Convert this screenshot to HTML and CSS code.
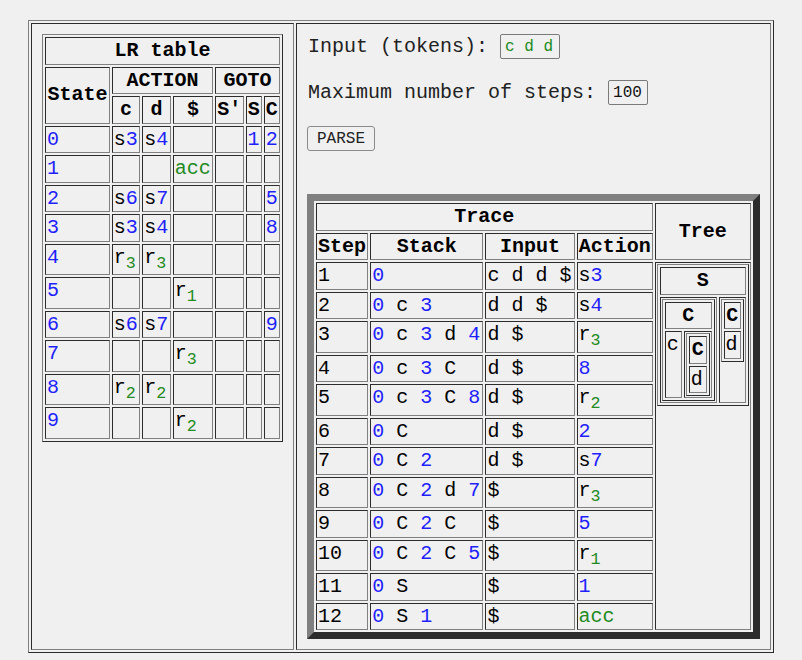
FILE: index.html
```html
<!DOCTYPE html>
<html>
<head>
<meta charset="utf-8">
<title>LR parser</title>
<link rel="stylesheet" href="styles.css">
</head>
<body>
<table class="layout">
  <tr>
    <td class="pane">
      <table class="grid lr">
        <tr><th colspan="7">LR table</th></tr>
        <tr><th rowspan="2">State</th><th colspan="3">ACTION</th><th colspan="3">GOTO</th></tr>
        <tr><th>c</th><th>d</th><th>$</th><th>S'</th><th>S</th><th>C</th></tr>
        <tr><td class="st">0</td><td>s<span class="st">3</span></td><td>s<span class="st">4</span></td><td></td><td></td><td class="st">1</td><td class="st">2</td></tr>
        <tr><td class="st">1</td><td></td><td></td><td class="acc">acc</td><td></td><td></td><td></td></tr>
        <tr><td class="st">2</td><td>s<span class="st">6</span></td><td>s<span class="st">7</span></td><td></td><td></td><td></td><td class="st">5</td></tr>
        <tr><td class="st">3</td><td>s<span class="st">3</span></td><td>s<span class="st">4</span></td><td></td><td></td><td></td><td class="st">8</td></tr>
        <tr><td class="st">4</td><td>r<sub class="acc">3</sub></td><td>r<sub class="acc">3</sub></td><td></td><td></td><td></td><td></td></tr>
        <tr><td class="st">5</td><td></td><td></td><td>r<sub class="acc">1</sub></td><td></td><td></td><td></td></tr>
        <tr><td class="st">6</td><td>s<span class="st">6</span></td><td>s<span class="st">7</span></td><td></td><td></td><td></td><td class="st">9</td></tr>
        <tr><td class="st">7</td><td></td><td></td><td>r<sub class="acc">3</sub></td><td></td><td></td><td></td></tr>
        <tr><td class="st">8</td><td>r<sub class="acc">2</sub></td><td>r<sub class="acc">2</sub></td><td></td><td></td><td></td><td></td></tr>
        <tr><td class="st">9</td><td></td><td></td><td>r<sub class="acc">2</sub></td><td></td><td></td><td></td></tr>
      </table>
    </td>
    <td class="pane">
      <div class="field"><span class="label">Input (tokens):</span><input class="box tokens" value="c d d"></div>
      <div class="field"><span class="label">Maximum number of steps:</span><input class="box steps" value="100"></div>
      <div class="field actions"><button class="parse">PARSE</button></div>
      <table class="grid trace">
        <tr><th colspan="4">Trace</th><th rowspan="2" class="c-tree">Tree</th></tr>
        <tr><th class="c-step">Step</th><th class="c-stack">Stack</th><th class="c-input">Input</th><th class="c-action">Action</th></tr>
        <tr><td>1</td><td><span class="st">0</span></td><td>c d d $</td><td>s<span class="st">3</span></td>
          <td rowspan="12" class="tree-cell">
            <table class="grid tree">
              <tr><th colspan="2">S</th></tr>
              <tr>
                <td>
                  <table class="grid tree">
                    <tr><th colspan="2">C</th></tr>
                    <tr>
                      <td>c</td>
                      <td>
                        <table class="grid tree">
                          <tr><th>C</th></tr>
                          <tr><td>d</td></tr>
                        </table>
                      </td>
                    </tr>
                  </table>
                </td>
                <td>
                  <table class="grid tree">
                    <tr><th>C</th></tr>
                    <tr><td>d</td></tr>
                  </table>
                </td>
              </tr>
            </table>
          </td>
        </tr>
        <tr><td>2</td><td><span class="st">0</span> c <span class="st">3</span></td><td>d d $</td><td>s<span class="st">4</span></td></tr>
        <tr><td>3</td><td><span class="st">0</span> c <span class="st">3</span> d <span class="st">4</span></td><td>d $</td><td>r<sub class="acc">3</sub></td></tr>
        <tr><td>4</td><td><span class="st">0</span> c <span class="st">3</span> C</td><td>d $</td><td class="st">8</td></tr>
        <tr><td>5</td><td><span class="st">0</span> c <span class="st">3</span> C <span class="st">8</span></td><td>d $</td><td>r<sub class="acc">2</sub></td></tr>
        <tr><td>6</td><td><span class="st">0</span> C</td><td>d $</td><td class="st">2</td></tr>
        <tr><td>7</td><td><span class="st">0</span> C <span class="st">2</span></td><td>d $</td><td>s<span class="st">7</span></td></tr>
        <tr><td>8</td><td><span class="st">0</span> C <span class="st">2</span> d <span class="st">7</span></td><td>$</td><td>r<sub class="acc">3</sub></td></tr>
        <tr><td>9</td><td><span class="st">0</span> C <span class="st">2</span> C</td><td>$</td><td class="st">5</td></tr>
        <tr><td>10</td><td><span class="st">0</span> C <span class="st">2</span> C <span class="st">5</span></td><td>$</td><td>r<sub class="acc">1</sub></td></tr>
        <tr><td>11</td><td><span class="st">0</span> S</td><td>$</td><td class="st">1</td></tr>
        <tr><td>12</td><td><span class="st">0</span> S <span class="st">1</span></td><td>$</td><td class="acc">acc</td></tr>
      </table>
    </td>
  </tr>
</table>
</body>
</html>
```

FILE: styles.css
```css
html, body {
  margin: 0;
  padding: 0;
  background: #f0f0f0;
}

body {
  font-family: "Liberation Mono", "Courier New", monospace;
  font-size: 20px;
  color: #000;
}

.layout {
  margin: 20px auto 0;
  border-collapse: separate;
  border-spacing: 2px;
  border: 1px solid;
  border-color: #808080 #2c2c2c #2c2c2c #808080;
}

.pane {
  border: 1px solid;
  border-color: #2c2c2c #808080 #808080 #2c2c2c;
  padding: 10px;
  vertical-align: top;
}

.grid {
  border-collapse: separate;
  border-spacing: 2px;
  border: 1px solid;
  border-color: #808080 #2c2c2c #2c2c2c #808080;
}

.grid td,
.grid th {
  border: 1px solid;
  border-color: #2c2c2c #808080 #808080 #2c2c2c;
  padding: 1px;
  line-height: 23.5px;
  vertical-align: top;
  text-align: left;
  font-weight: normal;
}

.grid th {
  font-weight: bold;
  text-align: center;
  vertical-align: middle;
}

.grid sub {
  line-height: 18.5px;
}

.grid.lr {
  width: 241px;
}

.st {
  color: #1f1fff;
}

.acc {
  color: #228b22;
}

.field {
  display: flex;
  align-items: center;
  gap: 12px;
  height: 25px;
  margin-bottom: 21px;
}

.field.actions {
  margin-bottom: 43px;
}

.label {
  color: #222;
  white-space: pre;
  padding-left: 1px;
}

.box {
  box-sizing: border-box;
  height: 25px;
  margin: 0;
  padding: 0 4px;
  border: 1px solid #7a7a7a;
  border-radius: 2px;
  background: #f0f0f0;
  font-family: "Liberation Mono", "Courier New", monospace;
  font-size: 16px;
  color: #111;
  outline: none;
}

.box.tokens {
  width: 60px;
  color: #228b22;
}

.box.steps {
  width: 40px;
}

.parse {
  box-sizing: border-box;
  height: 25px;
  width: 68px;
  margin: 0;
  padding: 0;
  border: 1px solid #8a8a8a;
  border-radius: 3px;
  background: #f0f0f0;
  font-family: "Liberation Mono", "Courier New", monospace;
  font-size: 16px;
  color: #222;
}

.grid.trace {
  width: 453px;
  border-width: 7px;
}

.trace .c-step { width: 48px; }
.trace .c-stack { width: 109px; }
.trace .c-input { width: 85px; }
.trace .c-action { width: 72px; }
.trace .c-tree { width: 92px; }

.grid.tree {
  width: 100%;
}
```
